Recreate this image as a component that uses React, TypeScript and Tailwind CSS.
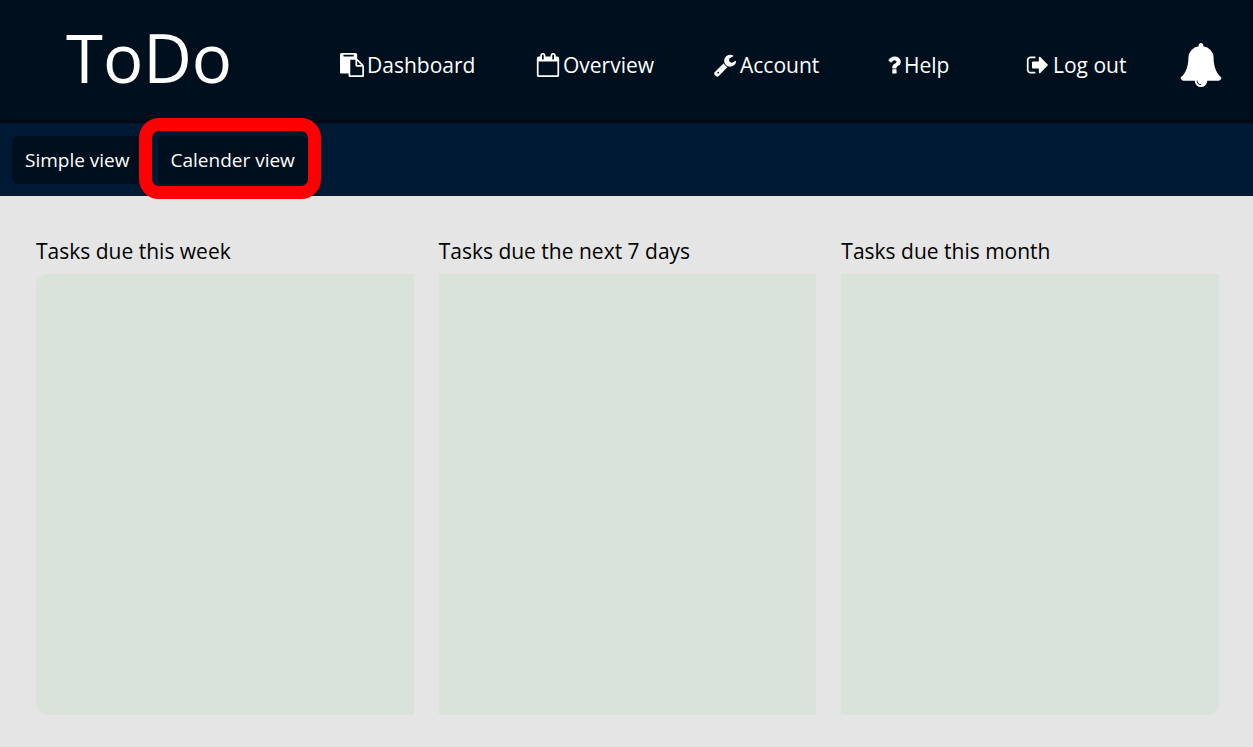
import React from "react";

const icons = {
  paste:
    "M768 1664h896v-640h-416q-40 0-68-28t-28-68v-416h-384v1152zm256-1440v-64q0-13-9.5-22.5t-22.5-9.5h-704q-13 0-22.5 9.5t-9.5 22.5v64q0 13 9.5 22.5t22.5 9.5h704q13 0 22.5-9.5t9.5-22.5zm256 672h299l-299-299v299zm512 128v672q0 40-28 68t-68 28h-960q-40 0-68-28t-28-68v-160h-544q-40 0-68-28t-28-68v-1344q0-40 28-68t68-28h1088q40 0 68 28t28 68v328q21 13 36 28l408 408q28 28 48 76t20 88z",
  calendar:
    "M192 1664h1408v-1024h-1408v1024zm384-1216v-288q0-14-9-23t-23-9h-64q-14 0-23 9t-9 23v288q0 14 9 23t23 9h64q14 0 23-9t9-23zm768 0v-288q0-14-9-23t-23-9h-64q-14 0-23 9t-9 23v288q0 14 9 23t23 9h64q14 0 23-9t9-23zm384-64v1280q0 52-38 90t-90 38h-1408q-52 0-90-38t-38-90v-1280q0-52 38-90t90-38h128v-96q0-66 47-113t113-47h64q66 0 113 47t47 113v96h384v-96q0-66 47-113t113-47h64q66 0 113 47t47 113v96h128q52 0 90 38t38 90z",
  wrench:
    "M448 1472q0-26-19-45t-45-19-45 19-19 45 19 45 45 19 45-19 19-45zm644-420l-682 682q-37 37-90 37-52 0-91-37l-106-108q-38-36-38-90 0-53 38-91l681-681q39 98 114.5 173.5t173.5 114.5zm634-435q0 39-23 106-47 134-164.5 217.5t-258.5 83.5q-185 0-316.5-131.5t-131.5-316.5 131.5-316.5 316.5-131.5q58 0 121.5 16.5t107.5 46.5q16 11 16 28t-16 28l-293 169v224l193 107q5-3 79-48.5t135.5-81 70.5-35.5q15 0 23.5 10t8.5 25z",
  question:
    "M1088 1256v240q0 16-12 28t-28 12h-240q-16 0-28-12t-12-28v-240q0-16 12-28t28-12h240q16 0 28 12t12 28zm316-600q0 54-15.5 101t-35 76.5-55 59.5-57.5 43.5-61 35.5q-41 23-68.5 65t-27.5 67q0 17-12 32.5t-28 15.5h-240q-15 0-25.5-18.5t-10.5-37.5v-45q0-83 65-156.5t143-108.5q59-27 84-56t25-76q0-42-46.5-74t-107.5-32q-65 0-108 29-35 25-107 115-13 16-31 16-12 0-25-8l-164-125q-13-10-15.5-25t5.5-28q160-266 464-266 80 0 161 31t146 83 106 127.5 41 158.5z",
  signOut:
    "M704 1440q0 4 1 20t.5 26.5-3 23.5-10 19.5-20.5 6.5h-320q-119 0-203.5-84.5t-84.5-203.5v-704q0-119 84.5-203.5t203.5-84.5h320q13 0 22.5 9.5t9.5 22.5q0 4 1 20t.5 26.5-3 23.5-10 19.5-20.5 6.5h-320q-66 0-113 47t-47 113v704q0 66 47 113t113 47h312l11.5 1 11.5 3 8 5.5 7 9 2 13.5zm928-544q0 26-19 45l-544 544q-19 19-45 19t-45-19-19-45v-288h-448q-26 0-45-19t-19-45v-384q0-26 19-45t45-19h448v-288q0-26 19-45t45-19 45 19l544 544q19 19 19 45z",
  bell:
    "M912 1696q0-16-16-16-59 0-101.5-42.5t-42.5-101.5q0-16-16-16t-16 16q0 73 51.5 124.5t124.5 51.5q16 0 16-16zm816-288q0 52-38 90t-90 38h-448q0 106-75 181t-181 75-181-75-75-181h-448q-52 0-90-38t-38-90q50-42 91-88t85-119.5 74.5-158.5 50-206 19.5-260q0-152 117-282.5t307-158.5q-8-19-8-39 0-40 28-68t68-28 68 28 28 68q0 20-8 39 190 28 307 158.5t117 282.5q0 139 19.5 260t50 206 74.5 158.5 85 119.5 91 88z",
};

type IconProps = { path: string; className: string; viewBox?: string };

function Icon({ path, className, viewBox = "0 0 1792 1792" }: IconProps) {
  return (
    <svg viewBox={viewBox} className={className} fill="currentColor" aria-hidden="true">
      <path d={path} />
    </svg>
  );
}

const links = [
  { label: "Dashboard", path: icons.paste },
  { label: "Overview", path: icons.calendar },
  { label: "Account", path: icons.wrench },
  { label: "Help", path: icons.question, narrow: true },
  { label: "Log out", path: icons.signOut },
];

const columns = [
  { title: "Tasks due this week", corners: "rounded-l-xl" },
  { title: "Tasks due the next 7 days", corners: "" },
  { title: "Tasks due this month", corners: "rounded-br-xl" },
];

const viewButton =
  "h-12 rounded-md bg-[#000f1e] px-[13px] text-[19px] leading-6 whitespace-nowrap text-white";

export default function App() {
  return (
    <div className="min-h-screen bg-[#e5e5e5] font-['Open_Sans','Noto_Sans',sans-serif] text-black">
      <header className="bg-[#000f1e] text-white shadow-[inset_0_-3px_3px_-1px_#000610]">
        <nav className="grid h-[123px] grid-cols-[340fr_196fr_177fr_174fr_139fr_153fr_74fr] items-center pt-1.5">
          <a href="#home" className="-mt-3.5 pl-[66px] text-[67px] leading-none">
            ToDo
          </a>
          {links.map((link) => (
            <a
              key={link.label}
              href="#"
              className="flex items-center gap-[3px] text-[21px] leading-7 whitespace-nowrap"
            >
              {link.narrow ? (
                <Icon path={link.path} viewBox="384 0 1024 1792" className="h-6 w-[14px] shrink-0" />
              ) : (
                <Icon path={link.path} className="size-6 shrink-0" />
              )}
              {link.label}
            </a>
          ))}
          <button type="button" aria-label="Notifications">
            <Icon path={icons.bell} className="size-11" />
          </button>
        </nav>
      </header>

      <div className="flex h-[73px] items-center gap-[15px] bg-[#001932] px-3">
        <button type="button" className={viewButton}>
          Simple view
        </button>
        <div className="relative">
          <button type="button" className={viewButton}>
            Calender view
          </button>
          <span className="pointer-events-none absolute -top-[18px] -right-[13px] -bottom-[15px] -left-[19px] rounded-[20px] border-[13px] border-[#ff0000]" />
        </div>
      </div>

      <main className="grid grid-cols-3 gap-[25px] pt-10 pr-[34px] pb-8 pl-9">
        {columns.map((column) => (
          <section key={column.title}>
            <h2 className="mb-2 text-[21px] leading-[30px]">{column.title}</h2>
            <div className={`h-[441px] bg-[#d9e3da] ${column.corners}`} />
          </section>
        ))}
      </main>
    </div>
  );
}
